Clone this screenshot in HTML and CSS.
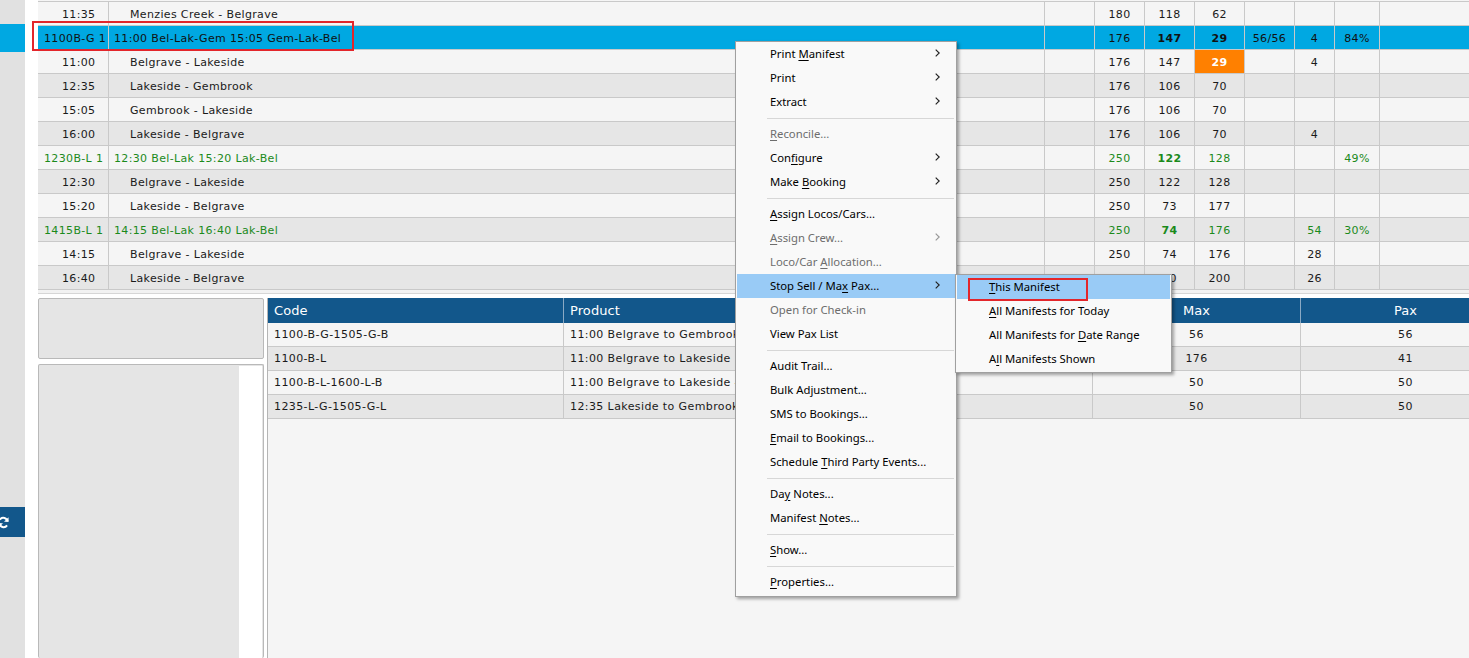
FILE: index.html
```html
<!DOCTYPE html>
<html lang="en">
<head>
  <meta charset="UTF-8">
  <title>Manifests</title>
  <link rel="stylesheet" href="styles.css">
</head>
<body>
  <div class="app">
    <div class="rail">
      <div class="rail-sel"></div>
      <div class="rail-btn">
        <svg width="13" height="13" viewBox="0 0 16 16">
          <path d="M13 7A5.2 5.2 0 0 0 3.6 4.4" stroke="#fff" stroke-width="2.4" fill="none"/>
          <path d="M14.2 1.6v5.6h-5.6z" fill="#fff"/>
          <path d="M3 9a5.2 5.2 0 0 0 9.4 2.6" stroke="#fff" stroke-width="2.4" fill="none"/>
          <path d="M1.8 14.4V8.8h5.6z" fill="#fff"/>
        </svg>
      </div>
    </div>

    <div class="main">
      <div class="manifest">
        <div class="row">
          <div class="cell code">11:35</div><div class="cell desc">Menzies Creek - Belgrave</div>
          <div class="cell"></div><div class="cell">180</div><div class="cell">118</div><div class="cell">62</div>
          <div class="cell"></div><div class="cell"></div><div class="cell"></div><div class="cell last"></div>
        </div>
        <div class="row sel">
          <div class="cell code">1100B-G 1 1505</div><div class="cell desc">11:00 Bel-Lak-Gem 15:05 Gem-Lak-Bel</div>
          <div class="cell"></div><div class="cell">176</div><div class="cell b">147</div><div class="cell b">29</div>
          <div class="cell">56/56</div><div class="cell">4</div><div class="cell">84%</div><div class="cell last"></div>
        </div>
        <div class="row">
          <div class="cell code">11:00</div><div class="cell desc">Belgrave - Lakeside</div>
          <div class="cell"></div><div class="cell">176</div><div class="cell">147</div><div class="cell warn">29</div>
          <div class="cell"></div><div class="cell">4</div><div class="cell"></div><div class="cell last"></div>
        </div>
        <div class="row alt">
          <div class="cell code">12:35</div><div class="cell desc">Lakeside - Gembrook</div>
          <div class="cell"></div><div class="cell">176</div><div class="cell">106</div><div class="cell">70</div>
          <div class="cell"></div><div class="cell"></div><div class="cell"></div><div class="cell last"></div>
        </div>
        <div class="row">
          <div class="cell code">15:05</div><div class="cell desc">Gembrook - Lakeside</div>
          <div class="cell"></div><div class="cell">176</div><div class="cell">106</div><div class="cell">70</div>
          <div class="cell"></div><div class="cell"></div><div class="cell"></div><div class="cell last"></div>
        </div>
        <div class="row alt">
          <div class="cell code">16:00</div><div class="cell desc">Lakeside - Belgrave</div>
          <div class="cell"></div><div class="cell">176</div><div class="cell">106</div><div class="cell">70</div>
          <div class="cell"></div><div class="cell">4</div><div class="cell"></div><div class="cell last"></div>
        </div>
        <div class="row grp">
          <div class="cell code">1230B-L 1 1520</div><div class="cell desc">12:30 Bel-Lak 15:20 Lak-Bel</div>
          <div class="cell"></div><div class="cell">250</div><div class="cell b">122</div><div class="cell">128</div>
          <div class="cell"></div><div class="cell"></div><div class="cell">49%</div><div class="cell last"></div>
        </div>
        <div class="row alt">
          <div class="cell code">12:30</div><div class="cell desc">Belgrave - Lakeside</div>
          <div class="cell"></div><div class="cell">250</div><div class="cell">122</div><div class="cell">128</div>
          <div class="cell"></div><div class="cell"></div><div class="cell"></div><div class="cell last"></div>
        </div>
        <div class="row">
          <div class="cell code">15:20</div><div class="cell desc">Lakeside - Belgrave</div>
          <div class="cell"></div><div class="cell">250</div><div class="cell">73</div><div class="cell">177</div>
          <div class="cell"></div><div class="cell"></div><div class="cell"></div><div class="cell last"></div>
        </div>
        <div class="row alt grp">
          <div class="cell code">1415B-L 1 1640</div><div class="cell desc">14:15 Bel-Lak 16:40 Lak-Bel</div>
          <div class="cell"></div><div class="cell">250</div><div class="cell b">74</div><div class="cell">176</div>
          <div class="cell"></div><div class="cell">54</div><div class="cell">30%</div><div class="cell last"></div>
        </div>
        <div class="row">
          <div class="cell code">14:15</div><div class="cell desc">Belgrave - Lakeside</div>
          <div class="cell"></div><div class="cell">250</div><div class="cell">74</div><div class="cell">176</div>
          <div class="cell"></div><div class="cell">28</div><div class="cell"></div><div class="cell last"></div>
        </div>
        <div class="row alt">
          <div class="cell code">16:40</div><div class="cell desc">Lakeside - Belgrave</div>
          <div class="cell"></div><div class="cell">250</div><div class="cell">50</div><div class="cell">200</div>
          <div class="cell"></div><div class="cell">26</div><div class="cell"></div><div class="cell last"></div>
        </div>
      </div>
      <div class="hscroll"></div>

      <div class="lower">
        <div class="side">
          <div class="panel panel-top"></div>
          <div class="panel panel-list"><div class="panel-track"></div></div>
        </div>
        <div class="products">
          <div class="grid-row head">
            <div class="gcell">Code</div><div class="gcell">Product</div>
            <div class="gcell num">Max</div><div class="gcell num">Pax</div>
          </div>
          <div class="grid-row">
            <div class="gcell">1100-B-G-1505-G-B</div><div class="gcell">11:00 Belgrave to Gembrook - 15:05 Gembrook to Belgrave</div>
            <div class="gcell num">56</div><div class="gcell num">56</div>
          </div>
          <div class="grid-row alt">
            <div class="gcell">1100-B-L</div><div class="gcell">11:00 Belgrave to Lakeside</div>
            <div class="gcell num">176</div><div class="gcell num">41</div>
          </div>
          <div class="grid-row">
            <div class="gcell">1100-B-L-1600-L-B</div><div class="gcell">11:00 Belgrave to Lakeside - 16:00 Lakeside to Belgrave</div>
            <div class="gcell num">50</div><div class="gcell num">50</div>
          </div>
          <div class="grid-row alt">
            <div class="gcell">1235-L-G-1505-G-L</div><div class="gcell">12:35 Lakeside to Gembrook - 15:05 Gembrook to Lakeside</div>
            <div class="gcell num">50</div><div class="gcell num">50</div>
          </div>
        </div>
      </div>
    </div>
  </div>

  <div class="menu">
    <div class="item"><span class="label">Print <u>M</u>anifest</span><span class="arrow"></span></div>
    <div class="item"><span class="label">Print</span><span class="arrow"></span></div>
    <div class="item"><span class="label">Extract</span><span class="arrow"></span></div>
    <div class="sep"></div>
    <div class="item off"><span class="label"><u>R</u>econcile...</span></div>
    <div class="item"><span class="label">Con<u>f</u>igure</span><span class="arrow"></span></div>
    <div class="item"><span class="label">Make <u>B</u>ooking</span><span class="arrow"></span></div>
    <div class="sep"></div>
    <div class="item"><span class="label"><u>A</u>ssign Locos/Cars...</span></div>
    <div class="item off"><span class="label"><u>A</u>ssign Crew...</span><span class="arrow"></span></div>
    <div class="item off"><span class="label">Loco/Car <u>A</u>llocation...</span></div>
    <div class="item on"><span class="label">Stop Sell / Ma<u>x</u> Pax...</span><span class="arrow"></span></div>
    <div class="item off"><span class="label">Open for Check-in</span></div>
    <div class="item"><span class="label">View Pax List</span></div>
    <div class="sep"></div>
    <div class="item"><span class="label">Audit Trail...</span></div>
    <div class="item"><span class="label">Bulk Adjustment...</span></div>
    <div class="item"><span class="label">SMS to Bookings...</span></div>
    <div class="item"><span class="label"><u>E</u>mail to Bookings...</span></div>
    <div class="item"><span class="label">Schedule <u>T</u>hird Party Events...</span></div>
    <div class="sep"></div>
    <div class="item"><span class="label">Da<u>y</u> Notes...</span></div>
    <div class="item"><span class="label">Manifest <u>N</u>otes...</span></div>
    <div class="sep"></div>
    <div class="item"><span class="label"><u>S</u>how...</span></div>
    <div class="sep"></div>
    <div class="item"><span class="label"><u>P</u>roperties...</span></div>
  </div>

  <div class="menu submenu">
    <div class="item on"><span class="label"><u>T</u>his Manifest</span></div>
    <div class="item"><span class="label"><u>A</u>ll Manifests for Today</span></div>
    <div class="item"><span class="label">All Manifests for <u>D</u>ate Range</span></div>
    <div class="item"><span class="label">A<u>l</u>l Manifests Shown</span></div>
  </div>

  <div class="mark mark-row"></div>
  <div class="mark mark-sub"></div>
</body>
</html>
```

FILE: styles.css
```css
* {
  box-sizing: border-box;
}
body {
  margin: 0;
  width: 1469px;
  height: 658px;
  overflow: hidden;
  position: relative;
  background: #fff;
  font-family: "DejaVu Sans", Verdana, sans-serif;
  font-size: 11px;
  color: #1a1a1a;
}
.app {
  display: flex;
  height: 658px;
}
.rail {
  flex: none;
  width: 25px;
  margin-right: 13px;
  background: #e1e1e1;
  display: flex;
  flex-direction: column;
}
.rail-sel {
  margin-top: 24px;
  height: 28px;
  background: #00a8e2;
}
.rail-btn {
  margin-top: 455px;
  height: 30px;
  background: #12578b;
  display: flex;
  align-items: center;
  overflow: hidden;
}
.rail-btn svg {
  margin-left: -3px;
  flex: none;
}
.main {
  flex: 1;
  min-width: 0;
  display: flex;
  flex-direction: column;
}

/* manifest list */
.manifest {
  padding-top: 1px;
  background: #f5f5f5;
}
.row {
  display: grid;
  grid-template-columns: 71px 936px 50px 50px 50px 50px 50px 40px 45px 1fr;
  height: 24px;
  border-bottom: 1px solid #c9c9c9;
  background: #f5f5f5;
  letter-spacing: 0.35px;
}
.row:first-child {
  height: 25px;
  border-top: 1px solid #c9c9c9;
}
.row.alt {
  background: #e6e6e6;
}
.row.grp {
  color: #1b8a1b;
}
.row.sel {
  background: #00a8e2;
  color: #111;
}
.cell {
  display: flex;
  align-items: center;
  justify-content: center;
  padding-top: 1px;
  border-right: 1px solid #c9c9c9;
  white-space: nowrap;
  overflow: hidden;
}
.cell.last {
  border-right: none;
}
.cell.code {
  justify-content: flex-start;
  padding-left: 24px;
}
.grp .cell.code,
.sel .cell.code {
  padding-left: 6px;
}
.cell.desc {
  justify-content: flex-start;
  padding-left: 21px;
}
.grp .cell.desc,
.sel .cell.desc {
  padding-left: 5px;
}
.cell.b {
  font-weight: bold;
}
.cell.warn {
  background: #ff8000;
  color: #fff;
  font-weight: bold;
}
.hscroll {
  height: 4px;
  margin-bottom: 4px;
  background: #f2f2f2;
  border-bottom: 1px solid #d6d6d6;
}

/* lower area */
.lower {
  flex: 1;
  min-height: 0;
  display: flex;
  gap: 3px;
}
.side {
  flex: none;
  width: 226px;
  display: flex;
  flex-direction: column;
  gap: 5px;
}
.panel {
  background: #e5e5e5;
  border: 1px solid #b9b9b9;
  border-radius: 2px;
}
.panel-top {
  height: 61px;
}
.panel-list {
  flex: 1;
  display: flex;
  justify-content: flex-end;
  padding: 1px 1px 0 0;
  border-bottom: none;
}
.panel-track {
  width: 23px;
  background: #fff;
}
.products {
  flex: 1;
  min-width: 0;
  overflow: hidden;
  background: #f5f5f5;
  border-left: 1px solid #b5b5b5;
}
.grid-row {
  display: grid;
  grid-template-columns: 296px 529px 208px 210px;
  height: 24px;
  border-bottom: 1px solid #c9c9c9;
  background: #f5f5f5;
  letter-spacing: 0.4px;
}
.grid-row.alt {
  background: #e6e6e6;
}
.grid-row.head {
  height: 25px;
  border-bottom: none;
  background: #12578b;
  color: #fff;
  font-size: 13px;
  letter-spacing: 0.1px;
}
.gcell {
  display: flex;
  align-items: center;
  padding-left: 6px;
  border-right: 1px solid #c9c9c9;
  white-space: nowrap;
  overflow: hidden;
}
.head .gcell {
  border-right-color: #8aa9c4;
}
.gcell.num {
  justify-content: center;
  padding-left: 0;
}

/* context menu */
.menu {
  position: absolute;
  left: 735px;
  top: 41px;
  width: 222px;
  padding: 0 1px 2px;
  background: #f9f9f9;
  border: 1px solid #a0a0a0;
  box-shadow: 2px 2px 3px rgba(0, 0, 0, 0.35);
  font-family: "Noto Sans", sans-serif;
  font-size: 11.3px;
  color: #000;
}
.item {
  height: 24px;
  display: flex;
  align-items: center;
  padding: 0 15px 2px 33px;
  white-space: nowrap;
}
.item.on {
  background: #99cbf6;
}
.item.off {
  color: #6d6d6d;
}
.item u {
  text-underline-offset: 2px;
}
.arrow {
  margin-left: auto;
  width: 5px;
  height: 8px;
  background: no-repeat center / 5px 8px url("data:image/svg+xml,%3Csvg xmlns='http://www.w3.org/2000/svg' width='5' height='8'%3E%3Cpath d='M0.7 0.6L4.2 4L0.7 7.4' stroke='%23222' stroke-width='1.2' fill='none'/%3E%3C/svg%3E");
}
.off .arrow {
  opacity: 0.45;
}
.sep {
  height: 8px;
  display: flex;
  align-items: center;
  padding: 0 1px 0 30px;
}
.sep::after {
  content: "";
  flex: 1;
  border-top: 1px solid #d7d7d7;
}
.submenu {
  left: 955px;
  top: 274px;
  width: 217px;
  padding: 0 1px 1px;
}
.submenu .item {
  padding-left: 32px;
}

/* red annotation boxes */
.mark {
  position: absolute;
  border: 2px solid #e3262b;
}
.mark-row {
  left: 32px;
  top: 21px;
  width: 322px;
  height: 30px;
}
.mark-sub {
  left: 968px;
  top: 278px;
  width: 120px;
  height: 23px;
}
```
